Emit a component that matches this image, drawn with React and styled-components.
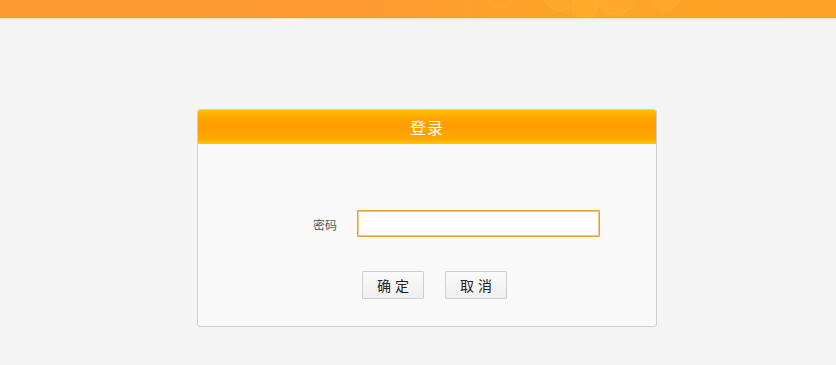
import React from 'react'
import styled, { createGlobalStyle } from 'styled-components'

const GlobalStyle = createGlobalStyle`
  html, body {
    margin: 0;
    padding: 0;
    background: #f4f4f4;
    font-family: "Noto Sans CJK SC", "Liberation Sans", sans-serif;
  }
`

const TopBar = styled.div`
  position: relative;
  height: 18px;
  background: linear-gradient(to right, #ff9933 0%, #ff9a30 45%, #ffa526 70%, #ffa028 100%);
  border-bottom: 1px solid #fde9c4;
  overflow: hidden;
`

const Bubbles = styled.svg`
  position: absolute;
  left: 470px;
  top: 0;
`

const Panel = styled.div`
  width: 458px;
  margin: 90px 0 0 197px;
  border: 1px solid #cfcfcf;
  border-radius: 3px;
  background: #f9f9f9;
  overflow: hidden;
`

const PanelHeader = styled.div`
  height: 34px;
  display: flex;
  align-items: center;
  justify-content: center;
  background: linear-gradient(to bottom, #ffc400 0%, #ffa600 20%, #ff9d00 50%, #ffa800 85%, #ffcc00 100%);
  color: #fff;
  font-size: 16px;
  letter-spacing: 1px;
`

const PanelBody = styled.div`
  height: 182px;
  display: flex;
  flex-direction: column;
`

const FieldRow = styled.div`
  display: flex;
  align-items: center;
  margin-top: 66px;
  padding-left: 115px;
`

const Label = styled.label`
  width: 44px;
  font-size: 12px;
  color: #555;
  padding-top: 2px;
`

const Input = styled.input`
  box-sizing: border-box;
  width: 243px;
  height: 27px;
  border: 1px solid #eba032;
  box-shadow: inset 0 0 0 1px #f7c374;
  border-radius: 1px;
  background: #fff;
  outline: none;
`

const ButtonRow = styled.div`
  display: flex;
  gap: 21px;
  margin-top: 34px;
  padding-left: 164px;
`

const Button = styled.button`
  box-sizing: border-box;
  width: 62px;
  height: 28px;
  border: 1px solid #cfcfcf;
  border-radius: 1px;
  background: linear-gradient(to bottom, #fafafa 0%, #efefef 100%);
  color: #222;
  font-family: inherit;
  font-size: 14px;
  letter-spacing: 4px;
  padding: 0 0 0 4px;
`

const App = () => {
  return (
    <>
      <GlobalStyle />
      <TopBar>
        <Bubbles width="240" height="18" viewBox="0 0 240 18">
          <g fill="rgba(255,220,120,0.06)" stroke="rgba(255,225,140,0.22)" strokeWidth="1">
            <circle cx="30" cy="-6" r="14" />
            <circle cx="90" cy="-8" r="18" />
            <circle cx="145" cy="-8" r="22" />
            <circle cx="195" cy="-6" r="16" />
            <circle cx="115" cy="8" r="12" />
          </g>
        </Bubbles>
      </TopBar>
      <Panel>
        <PanelHeader>登录</PanelHeader>
        <PanelBody>
          <FieldRow>
            <Label>密码</Label>
            <Input type="password" />
          </FieldRow>
          <ButtonRow>
            <Button>确定</Button>
            <Button>取消</Button>
          </ButtonRow>
        </PanelBody>
      </Panel>
    </>
  )
}

export default App
